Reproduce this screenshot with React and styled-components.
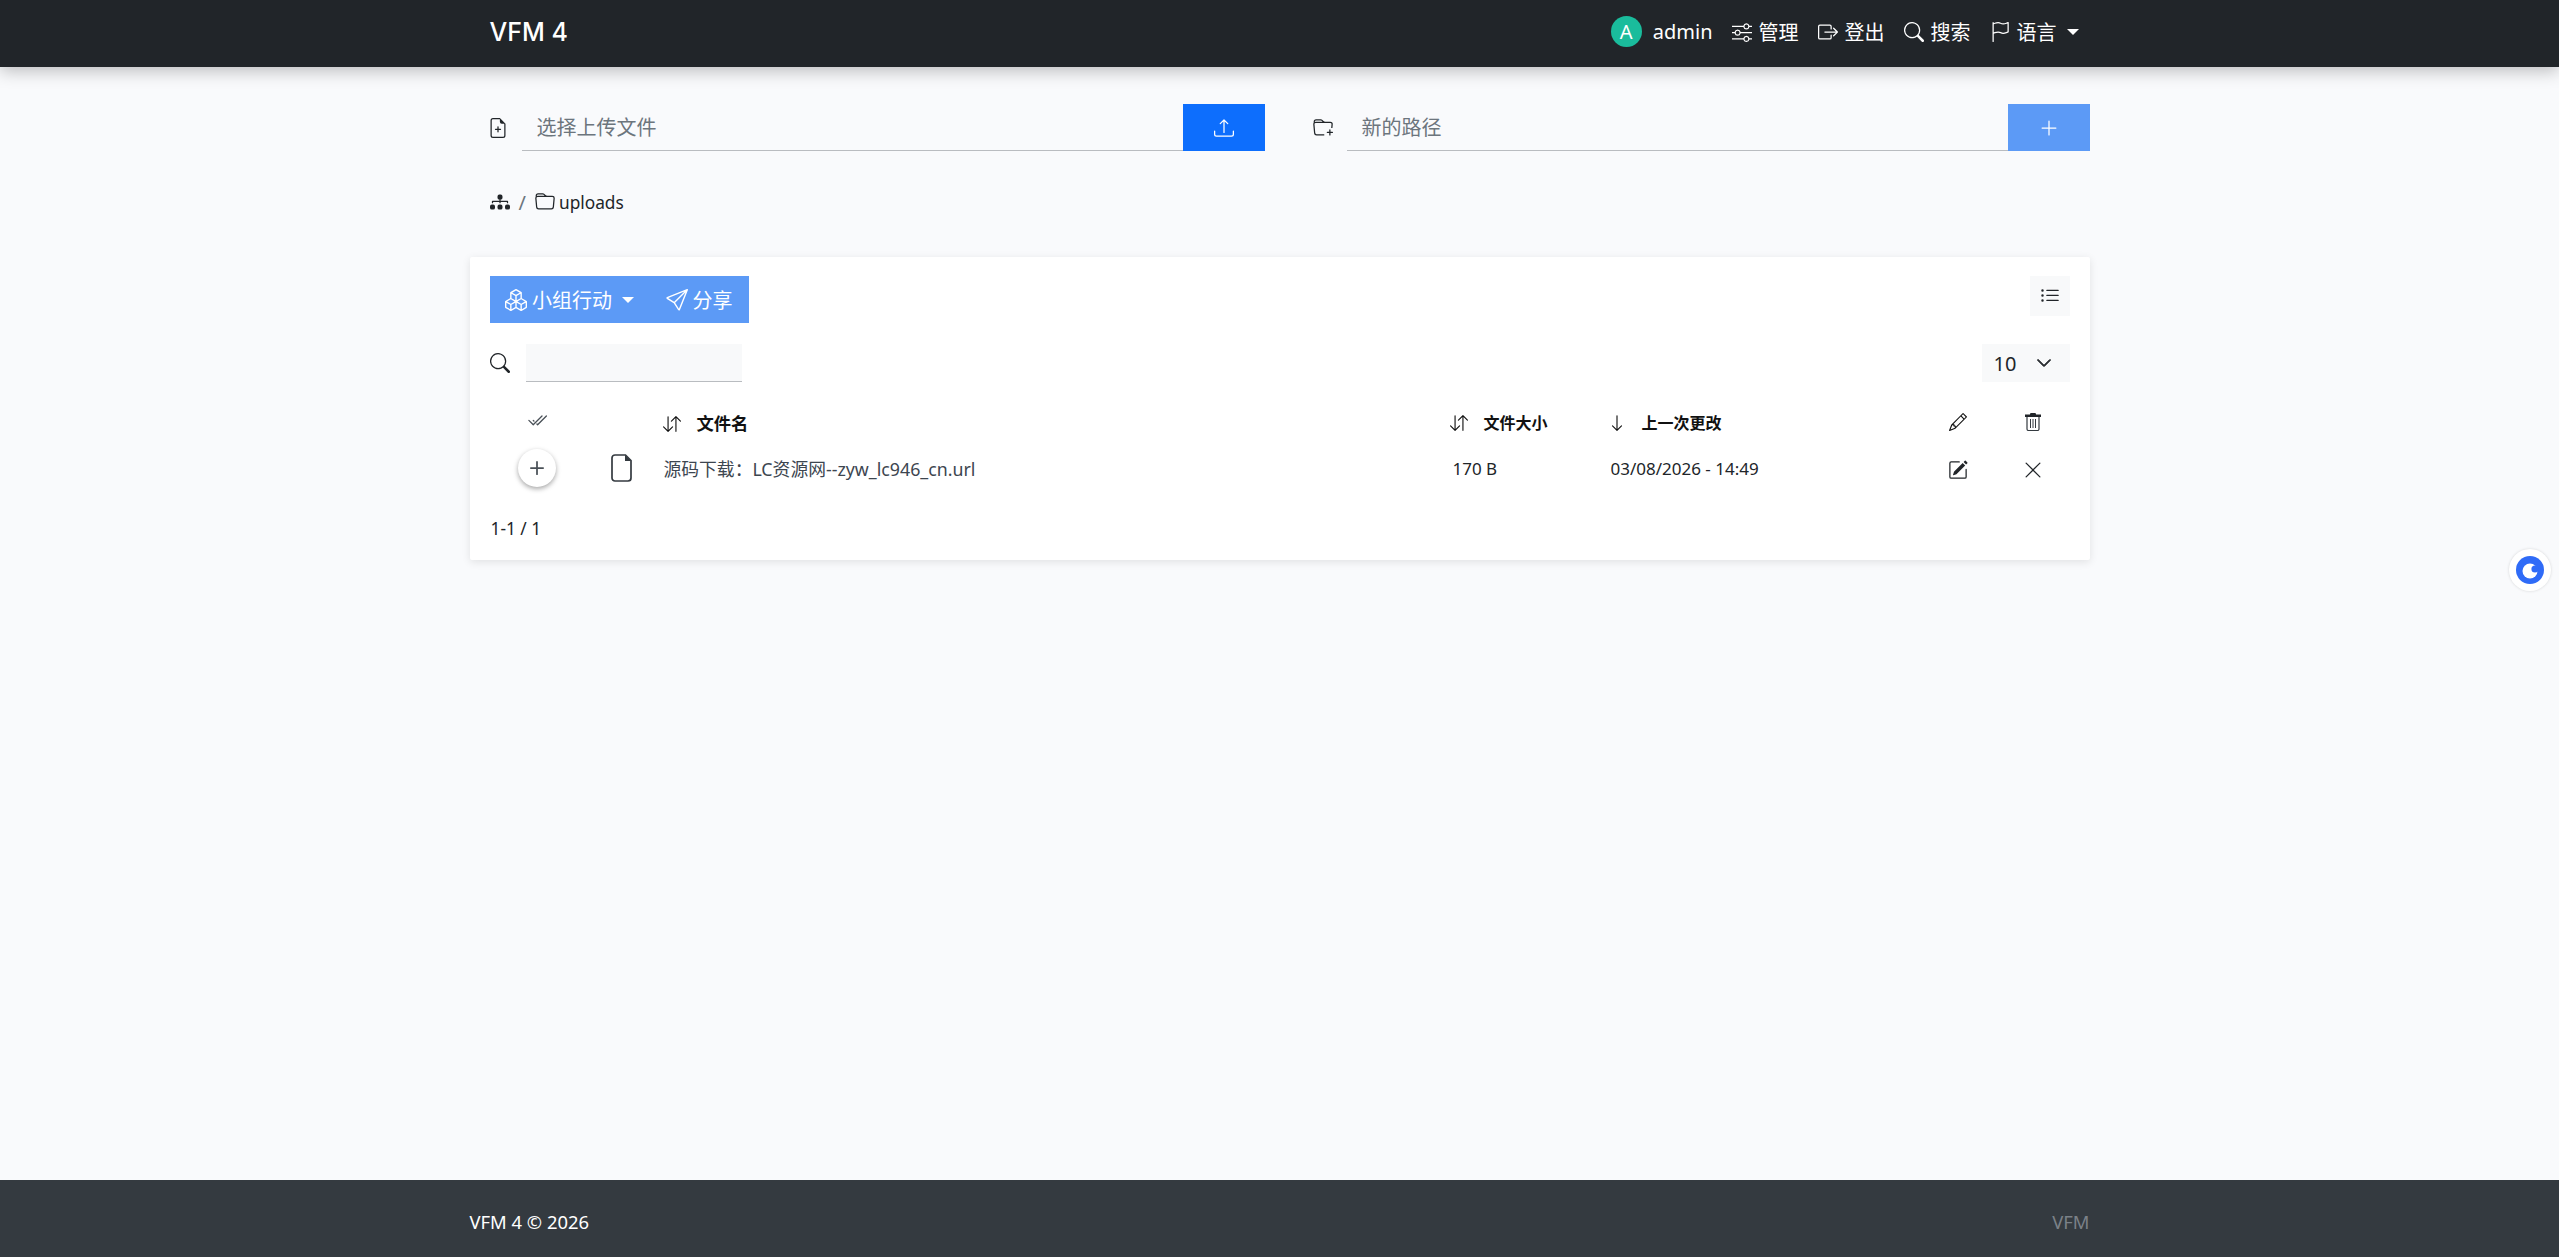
import styled, { createGlobalStyle } from "styled-components";

// Icons
import {
  BsArrowDown,
  BsArrowDownUp,
  BsBoxArrowRight,
  BsBoxes,
  BsCheck2All,
  BsChevronDown,
  BsDiagram3Fill,
  BsFileEarmarkPlus,
  BsFlag,
  BsFolder,
  BsFolderPlus,
  BsListUl,
  BsPencil,
  BsPencilSquare,
  BsPlus,
  BsPlusLg,
  BsSearch,
  BsSend,
  BsSliders,
  BsUpload,
  BsXLg,
} from "react-icons/bs";

const GlobalStyle = createGlobalStyle`
  html, body {
    margin: 0;
    padding: 0;
  }
  body {
    background: #f9fafc;
    color: #212529;
    font-family: "Noto Sans", "Noto Sans CJK SC", sans-serif;
    font-size: 17.3px;
  }
`;

const Page = styled.div`
  min-height: 1257px;
  display: flex;
  flex-direction: column;
`;

const Header = styled.header`
  height: 67px;
  background: #212529;
  box-shadow: 0 4px 16px rgba(0, 0, 0, 0.25);
  position: relative;
  display: flex;
  justify-content: center;
`;

const HeaderInner = styled.div`
  width: 1580px;
  padding: 0 20px 4px;
  display: flex;
  align-items: center;
  justify-content: space-between;
`;

const Brand = styled.div`
  color: #fff;
  font-family: "Inter", sans-serif;
  font-size: 25px;
  font-weight: 500;
`;

const Nav = styled.nav`
  display: flex;
  align-items: center;
  gap: 19px;
  margin-right: -9px;
  color: #fff;
  font-size: 20px;
`;

const NavItem = styled.div`
  display: flex;
  align-items: center;
  gap: 7px;
  white-space: nowrap;
  svg {
    font-size: 20px;
  }
`;

const Avatar = styled.span`
  width: 31px;
  height: 31px;
  border-radius: 50%;
  background: #1abc9c;
  color: #fff;
  font-size: 20px;
  display: flex;
  align-items: center;
  justify-content: center;
  margin-right: 4px;
`;

const Caret = styled.span`
  width: 0;
  height: 0;
  margin-left: ${(p) => p.$gap}px;
  border-top: 6px solid currentColor;
  border-left: 6px solid transparent;
  border-right: 6px solid transparent;
`;

const Main = styled.main`
  flex: 1;
  width: 1620px;
  margin: 0 auto;
  padding-top: 37px;
`;

const UploadRow = styled.div`
  display: grid;
  grid-template-columns: 795px 795px;
  gap: 30px;
`;

const UploadGroup = styled.div`
  display: flex;
  align-items: stretch;
  height: 47px;
  padding-left: 18px;
`;

const LeadIcon = styled.span`
  width: 34px;
  flex: none;
  display: flex;
  align-items: center;
  font-size: 20px;
`;

const FieldText = styled.div`
  flex: 1;
  display: flex;
  align-items: center;
  padding: 0 0 2px 15px;
  font-size: 20px;
  color: #6c757d;
  border-bottom: 1px solid #b9bcc0;
`;

const SubmitButton = styled.div`
  width: 82px;
  flex: none;
  display: flex;
  align-items: center;
  justify-content: center;
  color: #fff;
  font-size: 20px;
  background: ${(p) => (p.$muted ? "#5c9af6" : "#0d6efd")};
`;

const Breadcrumb = styled.div`
  display: flex;
  align-items: center;
  height: 30px;
  margin: 36px 0 40px;
  padding-left: 20px;
  svg {
    font-size: 20px;
  }
`;

const Slash = styled.span`
  margin: 0 9px;
  font-size: 20px;
  color: #6c757d;
`;

const CrumbName = styled.span`
  margin-left: 4px;
`;

const Card = styled.section`
  background: #fff;
  box-shadow: 0 2px 8px rgba(0, 0, 0, 0.1);
  border-radius: 2px;
  padding: 19px 20px 20px;
  height: 303px;
  box-sizing: border-box;
`;

const Toolbar = styled.div`
  display: flex;
  align-items: flex-start;
  justify-content: space-between;
`;

const ActionGroup = styled.div`
  display: flex;
  height: 47px;
  background: #5c9af6;
  color: #fff;
  font-size: 20px;
`;

const ActionButton = styled.div`
  display: flex;
  align-items: center;
  gap: 5px;
  padding: 0 16px 0 15.5px;
  white-space: nowrap;
  svg {
    font-size: 22px;
  }
`;

const IconButton = styled.div`
  width: 40px;
  height: 40px;
  background: #f8f9fa;
  display: flex;
  align-items: center;
  justify-content: center;
  font-size: 20px;
`;

const SearchRow = styled.div`
  display: flex;
  align-items: center;
  justify-content: space-between;
  margin-top: 21px;
`;

const SearchLeft = styled.div`
  display: flex;
  align-items: center;
  gap: 16px;
  svg {
    font-size: 20px;
  }
`;

const SearchField = styled.div`
  width: 216px;
  height: 37px;
  background: #f8f9fa;
  border-bottom: 1px solid #b9bcc0;
`;

const PageSize = styled.div`
  width: 88px;
  height: 38px;
  box-sizing: border-box;
  padding: 0 18px 0 12px;
  background: #f8f9fa;
  display: flex;
  align-items: center;
  justify-content: space-between;
  font-size: 20px;
  svg {
    font-size: 16px;
    stroke: currentColor;
    stroke-width: 1px;
  }
`;

const Table = styled.table`
  width: 1580px;
  margin-top: 17px;
  border-collapse: collapse;
  table-layout: fixed;
`;

const HeadCell = styled.th`
  height: 46px;
  padding: 0 0 0 ${(p) => p.$pad || 0}px;
  text-align: ${(p) => (p.$center ? "center" : "left")};
  font-size: ${(p) => p.$size || 16}px;
  font-weight: 700;
  color: #111;
  svg {
    vertical-align: -3px;
    font-size: ${(p) => p.$iconSize || 18}px;
  }
`;

const Cell = styled.td`
  height: 46px;
  padding: 0 0 0 ${(p) => p.$pad || 0}px;
  text-align: ${(p) => (p.$center ? "center" : "left")};
  font-size: 17px;
  color: #212529;
  svg {
    vertical-align: middle;
    font-size: 20px;
  }
`;

const SortLabel = styled.span`
  margin-left: 16px;
`;

const ExpandButton = styled.span`
  display: inline-flex;
  align-items: center;
  justify-content: center;
  width: 38px;
  height: 38px;
  border-radius: 50%;
  background: #fff;
  box-shadow: 0 2px 5px rgba(0, 0, 0, 0.35);
  svg {
    font-size: 28px;
    color: #495057;
  }
`;

const FileName = styled.span`
  color: #3d4650;
  font-size: 17.8px;
`;

const Pagination = styled.div`
  margin-top: 26px;
  padding-left: 1px;
`;

const Footer = styled.footer`
  height: 77px;
  background: #343a40;
  display: flex;
  justify-content: center;
`;

const FooterInner = styled.div`
  width: 1620px;
  padding-top: 5px;
  display: flex;
  align-items: center;
  justify-content: space-between;
  font-size: 18.4px;
  color: #fff;
`;

const FooterMark = styled.span`
  color: #7b8188;
`;

const SideWidget = styled.div`
  position: fixed;
  right: 8px;
  top: 549px;
  width: 42px;
  height: 42px;
  box-sizing: border-box;
  border-radius: 50%;
  background: #fff;
  box-shadow: 0 0 3px rgba(0, 0, 0, 0.15);
  display: flex;
  align-items: center;
  justify-content: center;
`;

const SideLogo = () => (
  <svg width="28" height="28" viewBox="0 0 28 28">
    <circle cx="14" cy="14" r="14" fill="#2f6bf7" />
    <circle cx="14" cy="15" r="7.5" fill="#fff" />
    <circle cx="19" cy="13" r="3.6" fill="#2f6bf7" />
  </svg>
);

const FileIcon = () => (
  <svg width="21" height="28" viewBox="0 0 21 28">
    <path
      d="M4 1h10.5L20 6.5V24a3 3 0 0 1-3 3H4a3 3 0 0 1-3-3V4a3 3 0 0 1 3-3z"
      fill="none"
      stroke="#343a40"
      strokeWidth="1.7"
    />
    <path d="M14 1l6 6h-6z" fill="#343a40" />
  </svg>
);

const TrashIcon = () => (
  <svg width="16" height="18" viewBox="0 0 16 18">
    <path d="M5.5 0h5l.6 1.5H16V4H0V1.5h4.9z" fill="#212529" />
    <path
      d="M2 4v12a1.5 1.5 0 0 0 1.5 1.5h9A1.5 1.5 0 0 0 14 16V4"
      fill="none"
      stroke="#343a40"
      strokeWidth="1.2"
    />
    <path d="M5.5 6v9M8 6v9M10.5 6v9" stroke="#343a40" strokeWidth="1" />
  </svg>
);

const App = () => {
  return (
    <Page>
      <GlobalStyle />
      <Header>
        <HeaderInner>
          <Brand>VFM 4</Brand>
          <Nav>
            <NavItem>
              <Avatar>A</Avatar>
              admin
            </NavItem>
            <NavItem>
              <BsSliders />
              管理
            </NavItem>
            <NavItem>
              <BsBoxArrowRight />
              登出
            </NavItem>
            <NavItem>
              <BsSearch />
              搜索
            </NavItem>
            <NavItem>
              <BsFlag />
              语言
              <Caret $gap={3} />
            </NavItem>
          </Nav>
        </HeaderInner>
      </Header>

      <Main>
        <UploadRow>
          <UploadGroup>
            <LeadIcon>
              <BsFileEarmarkPlus />
            </LeadIcon>
            <FieldText>选择上传文件</FieldText>
            <SubmitButton>
              <BsUpload />
            </SubmitButton>
          </UploadGroup>
          <UploadGroup>
            <LeadIcon>
              <BsFolderPlus />
            </LeadIcon>
            <FieldText>新的路径</FieldText>
            <SubmitButton $muted>
              <BsPlusLg />
            </SubmitButton>
          </UploadGroup>
        </UploadRow>

        <Breadcrumb>
          <BsDiagram3Fill />
          <Slash>/</Slash>
          <BsFolder />
          <CrumbName>uploads</CrumbName>
        </Breadcrumb>

        <Card>
          <Toolbar>
            <ActionGroup>
              <ActionButton>
                <BsBoxes />
                小组行动
                <Caret $gap={5} />
              </ActionButton>
              <ActionButton>
                <BsSend />
                分享
              </ActionButton>
            </ActionGroup>
            <IconButton>
              <BsListUl />
            </IconButton>
          </Toolbar>

          <SearchRow>
            <SearchLeft>
              <BsSearch />
              <SearchField />
            </SearchLeft>
            <PageSize>
              10
              <BsChevronDown />
            </PageSize>
          </SearchRow>

          <Table>
            <colgroup>
              <col width="95" />
              <col width="67" />
              <col width="789" />
              <col width="158" />
              <col width="322" />
              <col width="75" />
              <col width="74" />
            </colgroup>
            <thead>
              <tr>
                <HeadCell $center $iconSize={20}>
                  <BsCheck2All color="#495057" />
                </HeadCell>
                <HeadCell />
                <HeadCell $pad={11} $size={17.3}>
                  <BsArrowDownUp />
                  <SortLabel>文件名</SortLabel>
                </HeadCell>
                <HeadCell $pad={9}>
                  <BsArrowDownUp />
                  <SortLabel>文件大小</SortLabel>
                </HeadCell>
                <HeadCell $pad={9}>
                  <BsArrowDown />
                  <SortLabel>上一次更改</SortLabel>
                </HeadCell>
                <HeadCell $center>
                  <BsPencil />
                </HeadCell>
                <HeadCell $center>
                  <TrashIcon />
                </HeadCell>
              </tr>
            </thead>
            <tbody>
              <tr>
                <Cell $center>
                  <ExpandButton>
                    <BsPlus />
                  </ExpandButton>
                </Cell>
                <Cell $pad={26}>
                  <FileIcon />
                </Cell>
                <Cell $pad={12}>
                  <FileName>源码下载：LC资源网--zyw_lc946_cn.url</FileName>
                </Cell>
                <Cell $pad={12}>170 B</Cell>
                <Cell $pad={12}>03/08/2026 - 14:49</Cell>
                <Cell $center>
                  <BsPencilSquare />
                </Cell>
                <Cell $center>
                  <BsXLg />
                </Cell>
              </tr>
            </tbody>
          </Table>
          <Pagination>1-1 / 1</Pagination>
        </Card>
      </Main>

      <Footer>
        <FooterInner>
          <span>VFM 4 © 2026</span>
          <FooterMark>VFM</FooterMark>
        </FooterInner>
      </Footer>

      <SideWidget>
        <SideLogo />
      </SideWidget>
    </Page>
  );
};

export default App;
